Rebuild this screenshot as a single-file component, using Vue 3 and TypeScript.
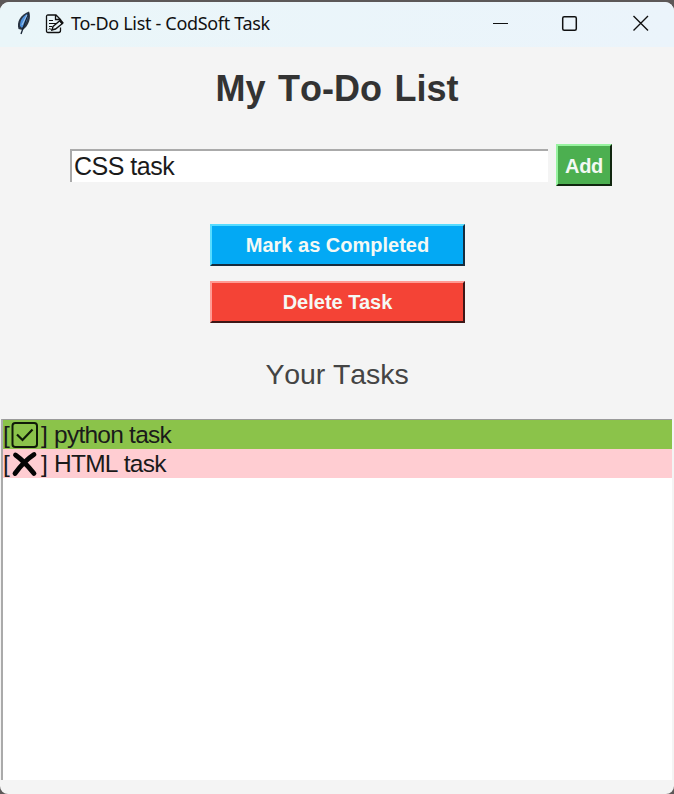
<script setup lang="ts">
import { ref } from 'vue'

interface Task {
  name: string
  done: boolean
}

const entry = ref('CSS task')
const tasks = ref<Task[]>([
  { name: 'python task', done: true },
  { name: 'HTML task', done: false },
])
const selected = ref(0)

function addTask() {
  const name = entry.value.trim()
  if (name) {
    tasks.value.push({ name, done: false })
    entry.value = ''
  }
}
function completeTask() {
  const task = tasks.value[selected.value]
  if (task) task.done = true
}
function deleteTask() {
  tasks.value.splice(selected.value, 1)
}
</script>

<template>
  <div class="desktop">
    <main class="window">
      <header class="titlebar">
        <svg class="feather" width="18" height="26" viewBox="0 0 18 26">
          <path d="M2.500 19C0.500 12 4 5 13 1.500C15.500 7 13 16 6.500 20Z" fill="#293442" />
          <path d="M4 16C4 10 7 6 12 3.500C12.500 8 10.500 13 6 18Z" fill="#4c8fdb" />
          <path d="M12.500 3L5 24" stroke="#172333" stroke-width="1.300" fill="none" />
          <path d="M11 5L6 15" stroke="#a9c9e9" stroke-width="1" fill="none" />
        </svg>
        <svg class="memo" width="20" height="20" viewBox="0 0 20 20" fill="none" stroke="#111">
          <path d="M15.500 13.500V16.500Q15.500 18.500 13.500 18.500H3Q1.500 18.500 1.500 17V2.500Q1.500 1 3 1H11L15.500 5.500V6.500M10.500 1V5.500H15.500" stroke-width="1.300" />
          <path d="M4 6.500H8M4 9.500H11M4 12.500H7M3.500 15.500Q5 13.500 6 15.500T8 15" stroke-width="1" />
          <path d="M8 12.500L15 6.500L17.500 9.500L10.500 15L7 16Z" stroke-width="1.400" />
          <path d="M14 7L16 5.500L18.800 8.800L16.800 10.500Z" fill="#111" stroke="none" />
        </svg>
        <span class="caption">To-Do List - CodSoft Task</span>
        <svg class="controls" width="158" height="18" viewBox="0 0 158 18" fill="none" stroke="#111">
          <path d="M1 9.500H16" stroke-width="1.200" />
          <rect x="70.700" y="2.700" width="13.600" height="13.600" rx="1.500" stroke-width="1.500" />
          <path d="M141.500 2L156 16.500M156 2L141.500 16.500" stroke-width="1.400" />
        </svg>
      </header>
      <h1>My To-Do List</h1>
      <form class="entry-row" @submit.prevent="addTask">
        <input v-model="entry" class="entry" type="text" />
        <button class="btn add" type="submit">Add</button>
      </form>
      <button class="btn complete" type="button" @click="completeTask">Mark as Completed</button>
      <button class="btn delete" type="button" @click="deleteTask">Delete Task</button>
      <h2>Your Tasks</h2>
      <ul class="list">
        <li v-for="(task, i) in tasks" :key="i" :class="{ done: task.done }" @click="selected = i">
          <span class="bracket">[</span>
          <svg v-if="task.done" class="mark" width="30" height="28" viewBox="0 0 30 28" fill="none" stroke="#101a08">
            <rect x="2.500" y="2" width="24.500" height="24" rx="2.800" stroke-width="2" />
            <path d="M7 13.500L12.500 19L22.500 8.500" stroke-width="2.200" />
          </svg>
          <svg v-else class="mark" width="30" height="28" viewBox="0 0 30 28" fill="none" stroke="#050505">
            <path d="M5.500 5Q14 11 24 23.500M24 4.500Q14 11 5 23.500" stroke-width="4.800" stroke-linecap="round" />
          </svg>
          <span class="bracket close">]</span>
          <span class="name">{{ task.name }}</span>
        </li>
      </ul>
    </main>
  </div>
</template>

<style>
body {
  margin: 0;
}
</style>

<style scoped>
* {
  box-sizing: border-box;
}
.desktop {
  height: 794px;
  padding-top: 2px;
  background: #5c5858;
  overflow: hidden;
}
.window {
  display: flex;
  flex-direction: column;
  align-items: center;
  height: 792px;
  border-radius: 9px 9px 8px 8px;
  background: #f4f4f4;
  overflow: hidden;
  font-family: "Liberation Sans", Arial, sans-serif;
  font-kerning: none;
}
.titlebar {
  display: flex;
  align-items: center;
  flex: none;
  width: 100%;
  height: 45px;
  padding: 0 24px 0 16px;
  background: linear-gradient(90deg, #eaf6f9, #ebf4fb);
}
.feather {
  margin-top: -4px;
}
.memo {
  margin: -2px 0 0 11px;
}
.caption {
  margin: -3px 0 0 6px;
  font: 18px/26px "Noto Sans", "Open Sans", sans-serif;
  letter-spacing: -0.32px;
  color: #111;
  white-space: nowrap;
}
.controls {
  margin: -3px 0 0 auto;
}
h1 {
  margin: 20px 0 0;
  font-size: 36px;
  line-height: 44px;
  font-weight: 700;
  word-spacing: 2.5px;
  color: #333;
  white-space: nowrap;
}
.entry-row {
  display: flex;
  align-items: center;
  gap: 8px;
  width: 542px;
  height: 42px;
  margin: 33px 0 0 8px;
}
.entry {
  width: 479px;
  height: 33px;
  padding: 0 0 0 2px;
  border: 0;
  border-top: 2px solid #aaa;
  border-left: 2px solid #aaa;
  border-radius: 0;
  outline: 0;
  background: #fff;
  color: #1a1a1a;
  font-family: inherit;
  font-size: 25px;
  letter-spacing: -0.5px;
}
.btn {
  flex: none;
  width: 255px;
  height: 42px;
  padding: 0;
  border: 2px solid;
  border-radius: 0;
  color: #f4f9f4;
  font-family: inherit;
  font-size: 20px;
  font-weight: 700;
}
.add {
  width: 56px;
  height: 42px;
  padding-top: 2px;
  background: #4caf50;
  border-color: #98f3a0 #10260f #10260f #98f3a0;
  letter-spacing: -0.3px;
}
.complete {
  margin: 38px 0 0 1px;
  background: #03a9f4;
  border-color: #57dcff #172c3d #172c3d #57dcff;
}
.delete {
  margin: 15px 0 0 1px;
  background: #f44336;
  border-color: #ff9b94 #3d1717 #3d1717 #ff9b94;
}
h2 {
  margin: 34px 0 0;
  font-size: 28.5px;
  line-height: 34px;
  font-weight: 400;
  letter-spacing: -0.1px;
  color: #444;
}
.list {
  align-self: flex-start;
  width: 671px;
  height: 361px;
  margin: 28px 0 0 1px;
  padding: 0;
  border-top: 1px solid #9a9a9a;
  border-left: 2px solid #aaa;
  background: #fff;
  list-style: none;
}
li {
  display: flex;
  align-items: center;
  height: 29px;
  background: #ffcdd2;
  color: #1a1a1a;
  font-size: 24.5px;
  line-height: 29px;
  white-space: nowrap;
}
li.done {
  background: #8bc34a;
}
.bracket {
  flex: none;
  width: 7px;
}
.mark {
  flex: none;
}
.close {
  width: 14px;
  padding-left: 1px;
}
.name {
  letter-spacing: -0.75px;
}
</style>
